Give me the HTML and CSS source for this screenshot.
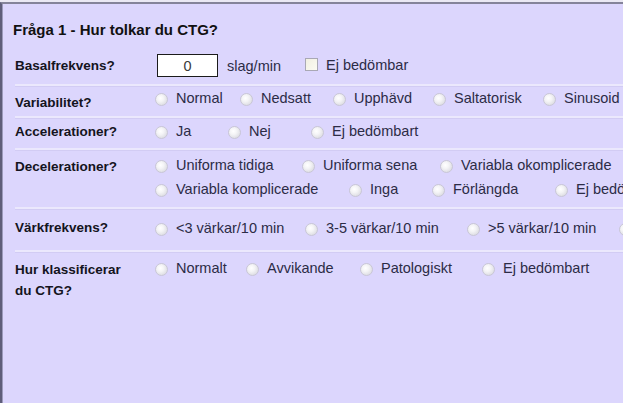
FILE: index.html
```html
<!DOCTYPE html>
<html lang="sv">
<head>
<meta charset="utf-8">
<title>Fråga 1</title>
<link rel="stylesheet" href="styles.css">
</head>
<body>
<div class="frame">
  <h1 class="title">Fråga 1 - Hur tolkar du CTG?</h1>

  <div class="row row-basal">
    <div class="label">Basalfrekvens?</div>
    <div class="opts basal">
      <input class="num" type="text" value="0">
      <span class="unit">slag/min</span>
      <label class="chk"><input type="checkbox"><span>Ej bedömbar</span></label>
    </div>
  </div>

  <div class="row row-var">
    <div class="label">Variabilitet?</div>
    <div class="opts">
      <div class="line cols-var">
        <label class="opt"><input type="radio" name="var"><span>Normal</span></label>
        <label class="opt"><input type="radio" name="var"><span>Nedsatt</span></label>
        <label class="opt"><input type="radio" name="var"><span>Upphävd</span></label>
        <label class="opt"><input type="radio" name="var"><span>Saltatorisk</span></label>
        <label class="opt"><input type="radio" name="var"><span>Sinusoid</span></label>
      </div>
    </div>
  </div>

  <div class="row row-acc">
    <div class="label">Accelerationer?</div>
    <div class="opts">
      <div class="line cols-acc">
        <label class="opt"><input type="radio" name="acc"><span>Ja</span></label>
        <label class="opt"><input type="radio" name="acc"><span>Nej</span></label>
        <label class="opt"><input type="radio" name="acc"><span>Ej bedömbart</span></label>
      </div>
    </div>
  </div>

  <div class="row row-dec">
    <div class="label">Decelerationer?</div>
    <div class="opts stack">
      <div class="line cols-dec1">
        <label class="opt"><input type="radio" name="dec"><span>Uniforma tidiga</span></label>
        <label class="opt"><input type="radio" name="dec"><span>Uniforma sena</span></label>
        <label class="opt"><input type="radio" name="dec"><span>Variabla okomplicerade</span></label>
      </div>
      <div class="line cols-dec2">
        <label class="opt"><input type="radio" name="dec"><span>Variabla komplicerade</span></label>
        <label class="opt"><input type="radio" name="dec"><span>Inga</span></label>
        <label class="opt"><input type="radio" name="dec"><span>Förlängda</span></label>
        <label class="opt"><input type="radio" name="dec"><span>Ej bedömbart</span></label>
      </div>
    </div>
  </div>

  <div class="row row-vark">
    <div class="label">Värkfrekvens?</div>
    <div class="opts">
      <div class="line cols-vark">
        <label class="opt"><input type="radio" name="vark"><span>&lt;3 värkar/10 min</span></label>
        <label class="opt"><input type="radio" name="vark"><span>3-5 värkar/10 min</span></label>
        <label class="opt"><input type="radio" name="vark"><span>&gt;5 värkar/10 min</span></label>
        <label class="opt"><input type="radio" name="vark"><span>Ej bedömbart</span></label>
      </div>
    </div>
  </div>

  <div class="row row-klass">
    <div class="label">Hur klassificerar<br>du CTG?</div>
    <div class="opts">
      <div class="line cols-klass">
        <label class="opt"><input type="radio" name="klass"><span>Normalt</span></label>
        <label class="opt"><input type="radio" name="klass"><span>Avvikande</span></label>
        <label class="opt"><input type="radio" name="klass"><span>Patologiskt</span></label>
        <label class="opt"><input type="radio" name="klass"><span>Ej bedömbart</span></label>
      </div>
    </div>
  </div>
</div>
</body>
</html>
```

FILE: styles.css
```css
html, body {
  margin: 0;
  padding: 0;
  height: 100%;
}

body {
  background: #ebe9f4;
  overflow: hidden;
  font-family: "Liberation Sans", Arial, sans-serif;
  color: #111;
}

.frame {
  margin-top: 2px;
  box-sizing: border-box;
  min-height: calc(100vh - 2px);
  background: #dcd6fd;
  border-top: 2px solid #85849a;
  border-left: 2px solid #5f5e7a;
  box-shadow: inset 1px 0 0 #9c9abb;
  padding: 17px 0 0 11px;
}

.title {
  margin: 0 0 8px 0;
  font-size: 15px;
  line-height: 18px;
  font-weight: bold;
  color: #111;
}

.row {
  display: grid;
  grid-template-columns: 140px 1fr;
  align-items: start;
  margin-left: 2px;
  border-bottom: 2px solid #ebe8fd;
  box-shadow: 0 1px 0 #d2ccf4;
  white-space: nowrap;
}

.row-klass {
  border-bottom: none;
  box-shadow: none;
}

.label {
  font-size: 13.5px;
  font-weight: bold;
  line-height: 21px;
  color: #141420;
}

.opts {
  font-size: 14.5px;
  line-height: 20px;
  color: #2c2c46;
}

.stack {
  display: flex;
  flex-direction: column;
  gap: 4px;
}

.line {
  display: grid;
}

.cols-var { grid-template-columns: 85px 93px 100px 110px auto; }
.cols-acc { grid-template-columns: 73px 83px auto; }
.cols-dec1 { grid-template-columns: 147px 138px auto; }
.cols-dec2 { grid-template-columns: 194px 83px 123px auto; }
.cols-vark { grid-template-columns: 150px 162px 152px auto; }
.cols-klass { grid-template-columns: 91px 114px 122px auto; }

/* row heights and vertical offsets */
.row-basal { height: 37px; align-items: center; }
.row-var { height: 30px; }
.row-var .label { padding-top: 6px; }
.row-var .opts { padding-top: 2px; }
.row-acc { height: 30px; }
.row-acc .label { padding-top: 3px; }
.row-acc .opts { padding-top: 3px; }
.row-dec { height: 57px; }
.row-dec .label { padding-top: 6px; }
.row-dec .opts { padding-top: 5px; }
.row-vark { height: 41px; }
.row-vark .label { padding-top: 8px; }
.row-vark .opts { padding-top: 9px; }
.row-klass .label { padding-top: 7px; }
.row-klass .opts { padding-top: 6px; }

.opt {
  display: flex;
  align-items: center;
  height: 20px;
}

.opt input[type="radio"] {
  appearance: none;
  -webkit-appearance: none;
  flex: none;
  width: 13px;
  height: 13px;
  margin: 2px 8px 0 0;
  border-radius: 50%;
  border: 1px solid #c9c7d6;
  box-sizing: border-box;
  background: radial-gradient(circle at 40% 38%, #ffffff 0%, #f4f4f6 35%, #dcdce2 80%, #c8c8d2 100%);
}

.basal {
  display: flex;
  align-items: center;
}

.num {
  box-sizing: border-box;
  width: 61px;
  height: 23px;
  margin: 0 0 0 2px;
  padding: 0;
  border: 1px solid #1b1b1b;
  background: #fff;
  font-family: "Liberation Sans", Arial, sans-serif;
  font-size: 14.5px;
  color: #3a3a3a;
  text-align: center;
  outline: none;
}

.unit {
  margin-left: 9px;
}

.chk {
  display: flex;
  align-items: center;
  margin-left: 24px;
  margin-top: -2px;
}

.chk input {
  appearance: none;
  -webkit-appearance: none;
  flex: none;
  width: 13px;
  height: 13px;
  margin: 0 8px 0 0;
  box-sizing: border-box;
  border: 1px solid #a9a8b4;
  background: linear-gradient(135deg, #f1efe2, #fbfaf3);
}
```
